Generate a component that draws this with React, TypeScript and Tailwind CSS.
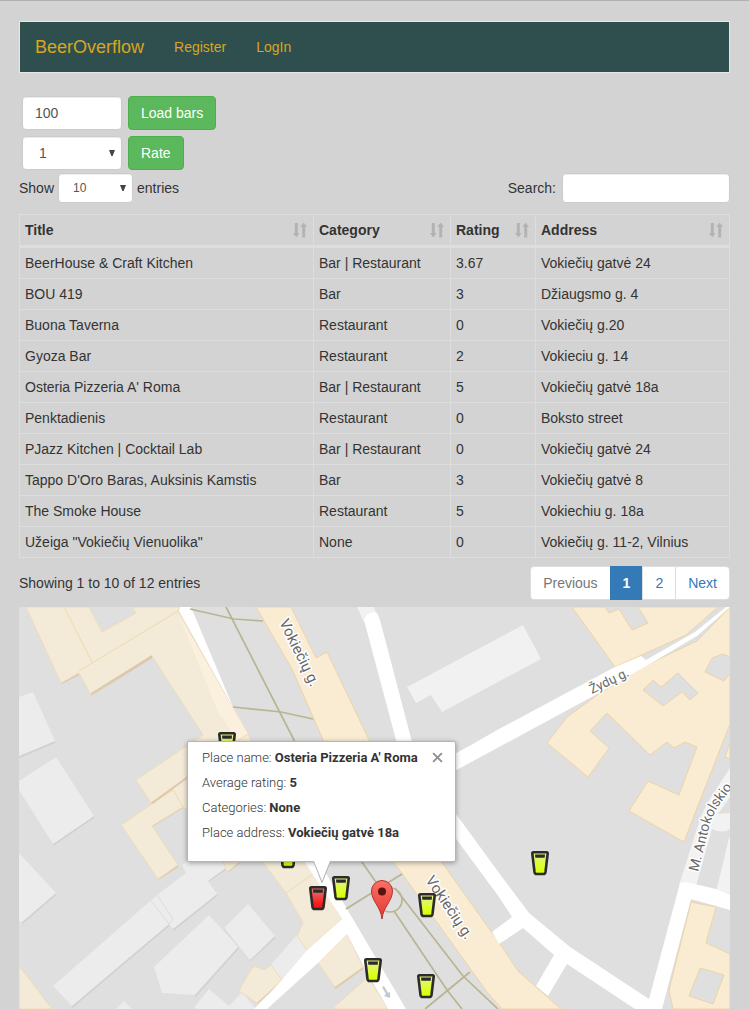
import { useState } from "react";
import type { ReactNode } from "react";

type Bar = { title: string; category: string; rating: string; address: string };

const bars: Bar[] = [
  { title: "BeerHouse & Craft Kitchen", category: "Bar | Restaurant", rating: "3.67", address: "Vokiečių gatvė 24" },
  { title: "BOU 419", category: "Bar", rating: "3", address: "Džiaugsmo g. 4" },
  { title: "Buona Taverna", category: "Restaurant", rating: "0", address: "Vokiečių g.20" },
  { title: "Gyoza Bar", category: "Restaurant", rating: "2", address: "Vokieciu g. 14" },
  { title: "Osteria Pizzeria A' Roma", category: "Bar | Restaurant", rating: "5", address: "Vokiečių gatvė 18a" },
  { title: "Penktadienis", category: "Restaurant", rating: "0", address: "Boksto street" },
  { title: "PJazz Kitchen | Cocktail Lab", category: "Bar | Restaurant", rating: "0", address: "Vokiečių gatvė 24" },
  { title: "Tappo D'Oro Baras, Auksinis Kamstis", category: "Bar", rating: "3", address: "Vokiečių gatvė 8" },
  { title: "The Smoke House", category: "Restaurant", rating: "5", address: "Vokiechiu g. 18a" },
  { title: 'Užeiga "Vokiečių Vienuolika"', category: "None", rating: "0", address: "Vokiečių g. 11-2, Vilnius" },
];

const columns = [
  { label: "Title", width: "w-[294px]" },
  { label: "Category", width: "w-[137px]" },
  { label: "Rating", width: "w-[85px]" },
  { label: "Address", width: "w-auto" },
];

const field = "rounded border border-[#ccc] bg-white text-[#555] shadow-[inset_0_1px_1px_rgba(0,0,0,0.075)] outline-none";

function SortIcon() {
  return (
    <svg viewBox="0 0 14 16" className="h-4 w-[14px] shrink-0 fill-[#b3b3b3]" aria-hidden="true">
      <path d="M1.800 1h3v10h1.900L3.300 15.500 0 11h1.800zM9.200 15.500V5H7.300L10.700 0.500 14 5H12.200v10.500z" />
    </svg>
  );
}

function Dropdown({ label, id, options, className }: { label: string; id: string; options: string[]; className: string }) {
  return (
    <span className="relative inline-block">
      <select id={id} aria-label={label} className={`${field} appearance-none ${className}`}>
        {options.map((o) => (
          <option key={o}>{o}</option>
        ))}
      </select>
      <svg viewBox="0 0 6 6" className="pointer-events-none absolute top-1/2 right-[7px] h-[6px] w-[6px] -translate-y-1/2 fill-[#444]" aria-hidden="true">
        <path d="M0 0h6L3.6 6H2.4z" />
      </svg>
    </span>
  );
}

function GreenButton({ children }: { children: ReactNode }) {
  return (
    <button type="button" className="h-[34px] rounded border border-[#4cae4c] bg-[#5cb85c] px-3 text-white">
      {children}
    </button>
  );
}

function Glass({ x, y, red = false }: { x: number; y: number; red?: boolean }) {
  return (
    <g transform={`translate(${x - 9} ${y - 12})`}>
      <path
        d="M2.400 1.300h13.200q1.200 0 1.100 1.200L14.500 21q-.3 2-2.200 2H5.700q-1.900 0-2.200-2L1.300 2.500q-.1-1.200 1.100-1.200z"
        fill={red ? "url(#redBeer)" : "url(#limeBeer)"}
        stroke="#2b2b2b"
        strokeWidth="2.600"
      />
      <path d="M4 3.600h10l-.3 3.200H4.300z" fill="#2b2b2b" />
    </g>
  );
}

const footways = [
  "M190 609L234 619L263 621",
  "M226 607L295 742L362 862L380 888",
  "M233 707L281 712L313 719",
  "M346 909L402 874",
  "M395 888L463 976L498 1009",
  "M394 911L447 990L462 1009",
  "M425 1009L470 972",
];

const paleBuildings = [
  "M19 697L33 692L55 741L19 756Z",
  "M19 781L56 757L94 816L53 844L19 790Z",
  "M19 853L56 893L21 923L19 921Z",
  "M53 986L72 1006L169 924L173 929L217 894L208 881L226 868L222 855L196 855L182 865L186 873L157 895Z",
  "M154 967L209 915L238 947L195 995L162 993Z",
  "M224 928L248 904L275 936L250 960Z",
  "M195 1006L209 989L229 1006L242 992L256 1009H195Z",
  "M116 1009L124 1001L132 1009Z",
  "M269 967L297 935L307 950L282 982Z",
];

const tanBuildings = [
  "M26 607L61 683L79 673L91 695L152 656L203 735L136 780L151 803L173 790L183 807L200 820L263 862L286 893L303 923L297 936L307 950L342 919L305 861L248 734L178 611L180 607H132L136 613L102 632L89 607Z",
  "M121 825L173 790L183 807L152 826L178 865L158 879Z",
  "M239 991L250 971L255 966L264 970L271 965L282 980L257 1003Z",
  "M347 934L318 963L335 987L363 967Z",
  "M334 1007L368 977L388 1009H334Z",
  "M223 861L227 872L241 861Z",
  "M19 966L52 1009H19Z",
];

const blocks = [
  "M256 607L292 669L324 742L393 861L487 992L502 1009H561L518 971L500 944L441 861L370 742L327 652L316 658L291 607Z",
  "M572 607L615 667L686 635L718 607H638L648 623L632 630L619 609L609 613L605 607Z",
  "M730 607L697 641L646 665L600 693L567 717L547 743L588 777L609 748L590 731L607 713L650 755L667 742L674 748L685 742L697 747L679 795L648 781L629 811L684 842L699 803L730 724V674L724 681L705 672L712 658L723 654L730 657ZM643 690L653 680L661 687L678 673L698 693L690 700L682 692L663 706Z",
  "M725 757L730 743V759Z",
  "M691 902L716 907L706 943L730 954V1009H673L669 990ZM700 968L689 996L713 1004L724 975Z",
];

const roads = [
  "M179 611L180 607H191L233 707L248 734Z",
  "M304 861H319L327 875L406 1009H388L364 967L347 934L318 963L267 1009H254L282 980L307 950L342 919Z",
  "M364 620Q368 610 377 613L380 620L412 742L430 780L456 814L475 840L499 873L529 913L570 947L649 999L680 883L686 882L716 889L730 895V910L691 899L662 1009H635L567 964L548 996L536 986L554 955L523 928L499 944L492 932L512 917L499 897L457 840L420 790L396 740Z",
  "M440 762L471 745L499 729L615 667L641 656L646 660L695 632L726 607H730L697 636L648 665L599 693L499 747L440 779Z",
];

function CityMap() {
  return (
    <svg viewBox="19 607 711 402" preserveAspectRatio="xMidYMin slice" className="block h-full w-full" role="img" aria-label="Map of bars">
      <defs>
        <linearGradient id="limeBeer" x1="0" y1="0" x2="0" y2="1">
          <stop offset="0.200" stopColor="#e3f47a" />
          <stop offset="0.700" stopColor="#dcff1e" />
          <stop offset="1" stopColor="#d8ff00" />
        </linearGradient>
        <linearGradient id="redBeer" x1="0" y1="0" x2="0" y2="1">
          <stop offset="0.200" stopColor="#ea6464" />
          <stop offset="0.700" stopColor="#f52323" />
          <stop offset="1" stopColor="#ff0808" />
        </linearGradient>
        <linearGradient id="pinFill" x1="0" y1="0" x2="0" y2="1">
          <stop offset="0" stopColor="#fb7067" />
          <stop offset="1" stopColor="#e2382f" />
        </linearGradient>
        <path id="antokolskioLine" d="M698 872L709 828Q713 812 723 800L752 760" />
      </defs>
      <rect x="19" y="607" width="711" height="402" fill="#dfdfdf" />
      <path d="M407 687L523 625L541 659L442 712L431 695L416 703Z" fill="#f1f1f1" />
      <path d="M357 607H374L379 620L364 622ZM679 885L701 816L709 800L730 768V797L718 814L730 813V829Q722 834 712 829L696 886ZM716 892L729 838H730V895Z" fill="#f2f2f2" />
      <g fill="none" stroke="#d0d0d7" strokeWidth="2">
        <path d="M19 757L55 742M53 845L94 817M22 923L56 894M72 1007L169 925M173 930L217 895M195 996L238 948M208 881L226 869M250 960L275 937M282 980L307 951" />
      </g>
      <g fill="#ececec">
        {paleBuildings.map((d) => (
          <path key={d} d={d} />
        ))}
      </g>
      <path d="M157 895L173 919L169 924M151 901L169 924M224 928L250 962" fill="none" stroke="#dcdcdc" />
      <path d="M61 683L79 674M91 695L152 657M151 803L188 777M158 879L178 866M152 826L183 807M307 951L342 920M335 988L363 968M227 872L240 862M257 1003L282 981" fill="none" stroke="#dcc5a8" strokeWidth="2" />
      <g fill="#f3ead8" stroke="#efdcba" strokeWidth="1">
        {tanBuildings.map((d) => (
          <path key={d} d={d} />
        ))}
      </g>
      <path d="M178 613L248 734L238 742L218 712Z" fill="#faf0dd" />
      <path d="M64 607L92 662M79 671L178 611M286 893L313 874M236 742L248 734" fill="none" stroke="#f0d9ae" />
      <path d="M152 803L188 777M91 694L152 656" fill="none" stroke="#dec8ac" strokeWidth="2" />
      <g fill="#faecd3" fillRule="evenodd" stroke="#ecd4a7" strokeWidth="1">
        {blocks.map((d) => (
          <path key={d} d={d} />
        ))}
      </g>
      <g fill="#fff">
        {roads.map((d) => (
          <path key={d} d={d} />
        ))}
      </g>
      <g fill="none" stroke="#b9b492" strokeWidth="1.700">
        {footways.map((d) => (
          <path key={d} d={d} />
        ))}
        <circle cx="390" cy="900" r="12" />
      </g>
      <path d="M382 987L384 986L388 993L390 992V998L384 996L386 994Z" fill="#c3c8d4" />
      <g fontFamily="Roboto, sans-serif" fontSize="14" fill="#686868" stroke="#fff" strokeWidth="3" strokeLinejoin="round" paintOrder="stroke">
        <text transform="translate(279 622) rotate(64)" fontSize="15">Vokiečių g.</text>
        <text transform="translate(425 880) rotate(56)" fontSize="15">Vokiečių g.</text>
        <text transform="translate(592 694) rotate(-26)" fontSize="13">Žydų g.</text>
        <text>
          <textPath href="#antokolskioLine">M. Antokolskio</textPath>
        </text>
      </g>
      <Glass x={227} y={744} />
      <Glass x={288} y={856} />
      <Glass x={540} y={863} />
      <Glass x={341} y={888} />
      <Glass x={318} y={898} red />
      <Glass x={427} y={905} />
      <Glass x={373} y={970} />
      <Glass x={426} y={986} />
      <path d="M382 919C381 907 371.500 901 371.500 891A10.500 10.500 0 0 1 392.500 891C392.500 901 383 907 382 919Z" fill="url(#pinFill)" stroke="#b3322b" />
      <circle cx="382" cy="891.500" r="4" fill="#5c130f" />
    </svg>
  );
}

function InfoWindow() {
  const [open, setOpen] = useState(true);
  if (!open) return null;
  const rows = [
    ["Place name:", "Osteria Pizzeria A' Roma"],
    ["Average rating:", "5"],
    ["Categories:", "None"],
    ["Place address:", "Vokiečių gatvė 18a"],
  ];
  return (
    <div className="absolute top-[134px] left-[168px] h-[121px] w-[269px] rounded-xs border border-[#b5b5b5] bg-white pt-[3px] pl-[14px] font-[Roboto,sans-serif] text-[13px] leading-[25px] font-light text-[#333] shadow-[0_1px_5px_rgba(0,0,0,0.35)]">
      {rows.map(([label, value]) => (
        <p key={label} className="whitespace-nowrap">
          {label} <b className="font-bold">{value}</b>
        </p>
      ))}
      <button type="button" aria-label="Close" onClick={() => setOpen(false)} className="absolute top-[9px] right-[11px] p-px">
        <svg viewBox="0 0 10 10" className="h-[11px] w-[11px] stroke-[#909090]" aria-hidden="true">
          <path d="M1 1L9 9M9 1L1 9" strokeWidth="1.700" />
        </svg>
      </button>
      <svg viewBox="0 0 22 24" className="absolute top-[118px] left-[123px] h-6 w-[22px]" aria-hidden="true">
        <path d="M2 0L11 22L20 0Z" fill="#fff" />
        <path d="M2.500 1L11 22.500L19.500 1" fill="none" stroke="#b0b0b0" />
      </svg>
    </div>
  );
}

export default function App() {
  const page = "-ml-px flex h-[34px] items-center border border-[#ddd] bg-white px-3 text-[#337ab7]";
  return (
    <main className="min-h-screen overflow-hidden border-t border-[#b0b0b0] bg-[#d3d3d3] px-[19px] pt-5 font-['Liberation_Sans',Arial,sans-serif] text-sm text-[#333]">
      <nav className="flex h-[52px] items-center border border-[#e7e7e7] bg-[#2f4f4f] text-[#daa520]">
        <a href="#" className="px-[15px] text-lg">BeerOverflow</a>
        <a href="#register" className="px-[15px]">Register</a>
        <a href="#login" className="px-[15px]">LogIn</a>
      </nav>

      <form className="mt-[23px] ml-[3px] flex flex-col gap-[6px]">
        <div className="flex gap-[6px]">
          <input aria-label="Number of bars" defaultValue="100" className={`${field} h-[34px] w-[100px] px-3`} />
          <GreenButton>Load bars</GreenButton>
        </div>
        <div className="flex gap-[6px]">
          <Dropdown id="rate" label="Rating" options={["1", "2", "3", "4", "5"]} className="h-[34px] w-[100px] pl-4" />
          <GreenButton>Rate</GreenButton>
        </div>
      </form>

      <div className="mt-[3px] flex items-center justify-between">
        <div className="flex items-center gap-1">
          <label htmlFor="length">Show</label>
          <Dropdown id="length" label="Entries per page" options={["10", "25", "50", "100"]} className="block h-[30px] w-[75px] pl-[14px] text-xs" />
          <span>entries</span>
        </div>
        <label className="flex items-center gap-[6px]">
          Search:
          <input type="search" className={`${field} h-[30px] w-[168px] px-[10px] text-xs`} />
        </label>
      </div>

      <table className="mt-[11px] w-full table-fixed border-separate border-spacing-0 border border-[#ddd]">
        <thead>
          <tr>
            {columns.map((c) => (
              <th key={c.label} className={`${c.width} border-r border-b-2 border-[#ddd] py-[5px] pr-[6px] pl-[5px] text-left font-bold last:border-r-0`}>
                <div className="flex h-5 items-center justify-between">
                  {c.label}
                  <SortIcon />
                </div>
              </th>
            ))}
          </tr>
        </thead>
        <tbody>
          {bars.map((b) => (
            <tr key={b.title}>
              {[b.title, b.category, b.rating, b.address].map((v, i) => (
                <td key={i} className="border-t border-r border-[#ddd] p-[5px] leading-5 last:border-r-0">
                  {v}
                </td>
              ))}
            </tr>
          ))}
        </tbody>
      </table>

      <div className="mt-2 flex items-center justify-between">
        <p>Showing 1 to 10 of 12 entries</p>
        <nav aria-label="Pagination" className="flex">
          <a href="#previous" className={`${page} rounded-l text-[#777]!`}>Previous</a>
          <a href="#1" aria-current="page" className={`${page} border-[#337ab7]! bg-[#337ab7]! font-bold text-white!`}>1</a>
          <a href="#2" className={page}>2</a>
          <a href="#next" className={`${page} rounded-r`}>Next</a>
        </nav>
      </div>

      <section className="relative mt-[7px] h-[402px] overflow-hidden">
        <CityMap />
        <InfoWindow />
      </section>
    </main>
  );
}
